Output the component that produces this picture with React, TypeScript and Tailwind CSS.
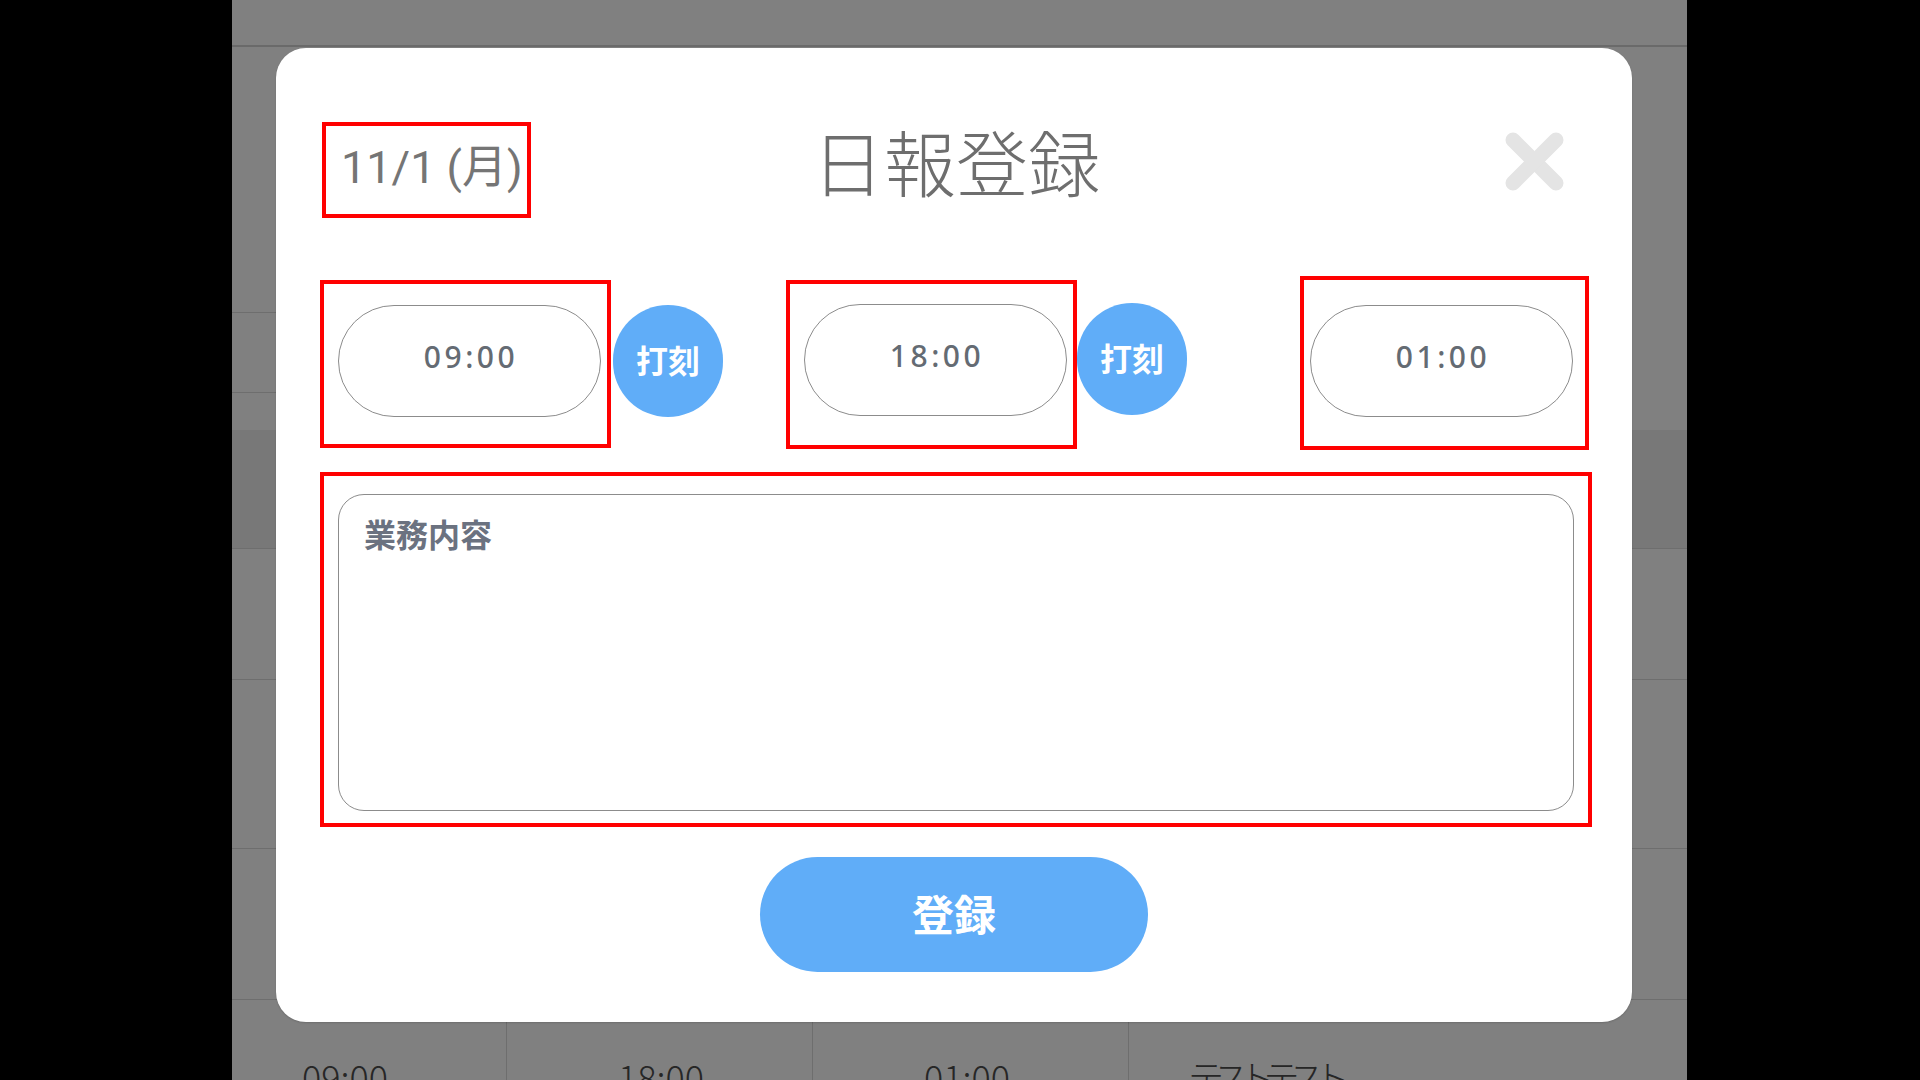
import React from 'react';

const cjk = '"Noto Sans", "Noto Sans CJK JP", sans-serif';

const TimePill = ({ value }: { value: string }) => (
  <div
    className="w-[263px] h-[112px] rounded-full border-[1.5px] border-[#8c8c8c] bg-white flex items-center justify-center pb-[9px] pl-[3px] text-[30px] font-medium tracking-[3.5px] text-[#646b73]"
    style={{ fontFamily: cjk }}
  >
    {value}
  </div>
);

const StampButton = ({ className }: { className: string }) => (
  <button
    className={`w-[110px] h-[112px] rounded-full bg-[#60adf8] text-white text-[32px] font-bold flex items-center justify-center shrink-0 ${className}`}
    style={{ fontFamily: cjk }}
  >
    打刻
  </button>
);

const CloseIcon = () => (
  <svg width="59" height="59" viewBox="0 0 59 59">
    <line x1="8" y1="8" x2="51" y2="51" stroke="#e4e4e4" strokeWidth="15" strokeLinecap="round" />
    <line x1="51" y1="8" x2="8" y2="51" stroke="#e4e4e4" strokeWidth="15" strokeLinecap="round" />
  </svg>
);

const App = () => {
  return (
    <div className="w-[1920px] h-[1080px] bg-black flex overflow-hidden">
      <div className="ml-[232px] w-[1455px] h-full bg-[#808080] relative overflow-hidden">
        {/* table behind the overlay */}
        <div className="flex flex-col h-full">
          <div className="h-[47px] border-b-2 border-[#6a6a6a] shrink-0" />
          <div className="h-[383px] shrink-0 relative">
            <div className="absolute left-0 top-[265px] w-[44px] border-b border-[#6e6e6e]" />
            <div className="absolute left-0 top-[345px] w-[44px] border-b border-[#6e6e6e]" />
          </div>
          <div className="h-[119px] bg-[#787878] border-b border-[#6e6e6e] shrink-0" />
          <div className="h-[131px] border-b border-[#6e6e6e] shrink-0" />
          <div className="h-[169px] border-b border-[#6e6e6e] shrink-0" />
          <div className="h-[151px] border-b border-[#6e6e6e] shrink-0" />
          <div
            className="flex flex-1 text-[36px] font-light text-[#262626] leading-none"
            style={{ fontFamily: '"Noto Sans CJK JP", sans-serif' }}
          >
            <div className="w-[275px] border-r border-[#6e6e6e] pt-[58px] pl-[70px]">09:00</div>
            <div className="w-[306px] border-r border-[#6e6e6e] pt-[58px] pl-[111px]">18:00</div>
            <div className="w-[316px] border-r border-[#6e6e6e] pt-[58px] pl-[111px]">01:00</div>
            <div className="flex-1 pt-[58px] pl-[59px] tracking-[-0.3em]">テストテスト</div>
          </div>
        </div>

        {/* modal */}
        <div className="absolute left-[44px] top-[48px] w-[1356px] h-[974px] bg-white rounded-[30px] shadow-[0_1px_2px_rgba(0,0,0,0.15)] pt-[74px] pl-[44px] pr-[40px]">
          <div className="grid grid-cols-[1fr_auto_1fr] items-start">
            <div
              className="ml-[2px] w-[209px] h-[96px] border-4 border-[#ff0000] flex items-center pl-[15px] pb-[6px] text-[45px] text-[#757575] leading-none"
              style={{ fontFamily: '"Roboto", "Noto Sans CJK JP", sans-serif' }}
            >
              11/1 (月)
            </div>
            <h1
              className="mt-[2px] text-[72px] font-light text-[#6e6e6e] leading-none"
              style={{ fontFamily: '"Noto Sans CJK JP", sans-serif' }}
            >
              日報登録
            </h1>
            <div className="flex justify-end pr-[28px] pt-[10px]">
              <CloseIcon />
            </div>
          </div>

          <div className="mt-[58px] flex items-start">
            <div className="mt-[4px] w-[291px] h-[168px] border-4 border-[#ff0000] pt-[21px] pl-[14px] shrink-0">
              <TimePill value="09:00" />
            </div>
            <StampButton className="ml-[2px] mt-[29px]" />
            <div className="ml-[63px] mt-[4px] w-[291px] h-[169px] border-4 border-[#ff0000] pt-[20px] pl-[14px] shrink-0">
              <TimePill value="18:00" />
            </div>
            <StampButton className="mt-[27px]" />
            <div className="ml-auto mr-[3px] w-[289px] h-[174px] border-4 border-[#ff0000] pt-[25px] pl-[6px] shrink-0">
              <TimePill value="01:00" />
            </div>
          </div>

          <div className="mt-[22px] w-[1272px] h-[355px] border-4 border-[#ff0000] pt-[18px] pl-[14px]">
            <textarea
              placeholder="業務内容"
              className="w-[1236px] h-[317px] rounded-[26px] border-[1.5px] border-[#8c8c8c] resize-none outline-none pt-[20px] pl-[25px] text-[32px] font-bold text-[#4b5563] placeholder:text-[#6b7280] leading-tight"
              style={{ fontFamily: cjk }}
            />
          </div>

          <div className="mt-[30px] flex justify-center pr-[4px]">
            <button
              className="w-[388px] h-[115px] rounded-full bg-[#60adf8] text-white text-[42px] font-bold"
              style={{ fontFamily: cjk }}
            >
              登録
            </button>
          </div>
        </div>
      </div>
    </div>
  );
};

export default App;
